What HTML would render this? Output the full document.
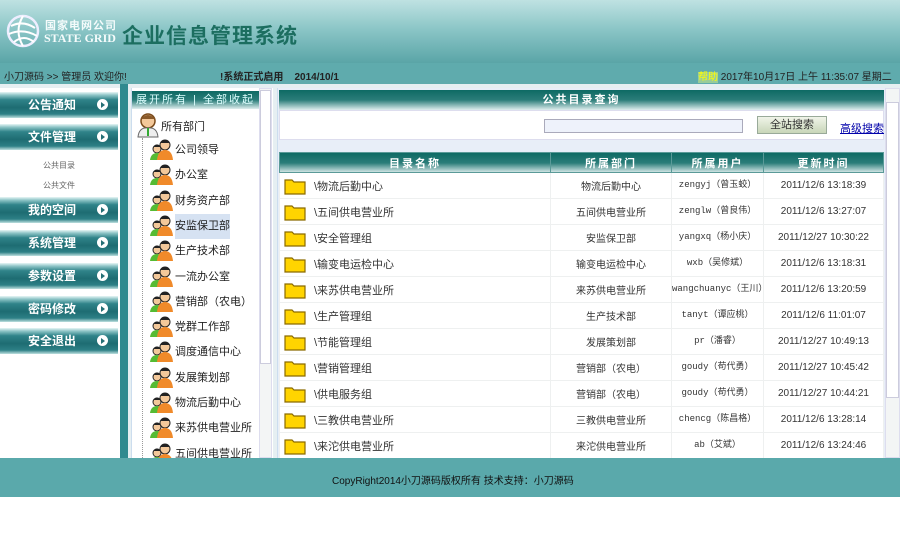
<!DOCTYPE html>
<html><head><meta charset="utf-8">
<style>
*{margin:0;padding:0;box-sizing:border-box}
body{width:900px;height:537px;background:#fff;font-family:"Liberation Sans","Noto Sans CJK SC",sans-serif;font-size:11px;color:#222;position:relative;overflow:hidden}
.a{position:absolute}
#hdr{left:0;top:0;width:900px;height:63px;background:linear-gradient(180deg,#bfe2e2 0%,#8cc6c7 45%,#5aa5a7 100%)}
#nav{left:0;top:63px;width:900px;height:21px;background:#5fabad}
#body{left:0;top:84px;width:900px;height:374px;background:#e6eff2}
#foot{left:0;top:458px;width:900px;height:39px;background:#5aa9ab}
.mb{left:0;width:118px;height:26px;background:linear-gradient(180deg,#e8f6f6 0%,#8dc4c6 12%,#2f8389 30%,#1e6c72 60%,#2d8086 85%,#bfe0e0 100%);color:#fff;font-weight:bold;font-size:12px;text-align:center;line-height:26px;padding-right:14px}
.mb i{position:absolute;right:10px;top:7px;width:11px;height:11px;border-radius:50%;background:#fff}
.mb i:after{content:"";position:absolute;left:4px;top:2.5px;border-left:4px solid #246f75;border-top:3px solid transparent;border-bottom:3px solid transparent}
.th{background:linear-gradient(180deg,#0e6a64 0%,#2b7d79 50%,#dfeeee 100%);color:#fff;font-weight:bold;letter-spacing:2px;text-align:center}
.tr{left:148px;height:25px;line-height:25px;font-size:11px}
.tr svg{position:absolute;left:0;top:0}
.tr span{position:absolute;left:27px;white-space:nowrap}
table{border-collapse:collapse}
td{border:1px solid #eef0f0;height:26px;text-align:center;font-size:10px;color:#333;padding:0}
tr.hd td{height:20px;color:#fff;font-weight:bold;border-color:#5a9a98;font-size:11px}
td.n{text-align:left;padding-left:34px;position:relative;font-size:11px}
td.u{font-family:"Liberation Mono","Noto Sans CJK SC",monospace;font-size:9px;line-height:11px}
.f{position:absolute;left:4px;top:4px}
</style></head><body>
<div id="hdr" class="a">
 <svg class="a" style="left:4px;top:12px" width="38" height="38" viewBox="0 0 38 38"><circle cx="19" cy="19" r="15" fill="none" stroke="#eef" stroke-width="2.5"/><path d="M7 14 Q19 8 31 16 M5 22 Q19 16 33 24 M10 30 Q20 22 30 30 M19 4 Q10 19 19 34" stroke="#fff" stroke-width="2" fill="none"/></svg>
 <div class="a" style="left:45px;top:17px;color:#f4fbfb;font-size:11px;font-weight:bold;letter-spacing:1px">国家电网公司</div>
 <div class="a" style="left:44px;top:31px;color:#f4fbfb;font-size:12px;font-weight:bold;font-family:'Liberation Serif',serif">STATE GRID</div>
 <div class="a" style="left:122px;top:20px;color:#1c6e60;font-size:21px;font-weight:bold;letter-spacing:1px">企业信息管理系统</div>
</div>
<div id="nav" class="a">
 <div class="a" style="left:4px;top:5px;font-size:10px">小刀源码 &gt;&gt; 管理员 欢迎你!</div>
 <div class="a" style="left:220px;top:5px;font-size:10px;font-weight:bold">!系统正式启用&nbsp;&nbsp;&nbsp; 2014/10/1</div>
 <div class="a" style="left:698px;top:5px;font-size:10px;white-space:nowrap"><span style="color:#ff0;background:#9c9">帮助</span> 2017年10月17日 上午 11:35:07 星期二</div>
</div>
<div id="body" class="a">
 <div class="a" style="left:0;top:4px;width:120px;height:370px;background:#fff"></div>
 <div class="a" style="left:120px;top:0;width:8px;height:374px;background:#2f8a8f"></div>
 <div class="a mb" style="top:8px">公告通知<i></i></div>
 <div class="a mb" style="top:40px">文件管理<i></i></div>
 <div class="a" style="left:0;top:72px;width:118px;height:38px;font-size:8px;color:#666;text-align:center;line-height:20px">公共目录<br>公共文件</div>
 <div class="a mb" style="top:113px">我的空间<i></i></div>
 <div class="a mb" style="top:146px">系统管理<i></i></div>
 <div class="a mb" style="top:179px">参数设置<i></i></div>
 <div class="a mb" style="top:212px">密码修改<i></i></div>
 <div class="a mb" style="top:244px">安全退出<i></i></div>

 <div class="a" style="left:131px;top:4px;width:142px;height:370px;background:#fff;border-left:1px solid #cde"></div>
 <div class="a th" style="left:132px;top:7px;width:127px;height:18px;line-height:18px;font-weight:normal;font-size:11px;color:#dff">展开所有 | 全部收起</div>
 <div class="a" style="left:259px;top:4px;width:13px;height:370px;background:#f3f5f5;border:1px solid #dde"></div>
 <div class="a" style="left:260px;top:6px;width:11px;height:274px;background:#fff;border:1px solid #ccd"></div>
 <svg class="a" style="left:136px;top:28px" width="24" height="26"><circle cx="12" cy="9" r="7" fill="#f3c89a" stroke="#7a4a1a" stroke-width="1.5"/><path d="M5 7 Q12 -1 19 7" fill="#8a5a2a"/><path d="M2 25 Q3 15 12 16 Q21 15 22 25Z" fill="#eee" stroke="#666"/><rect x="11" y="16" width="2" height="8" fill="#3a3"/></svg>
 <div class="a" style="left:161px;top:34px;font-size:11px">所有部门</div>
 <div class="a" style="left:142px;top:54px;width:1px;height:320px;border-left:1px dotted #999"></div>
 <div id="tree"></div>

 <div class="a" style="left:277px;top:4px;width:608px;height:370px;background:#e8eef8;border-left:1px solid #cde"></div>
 <div class="a th" style="left:279px;top:6px;width:605px;height:20px;line-height:20px;font-size:11px">公共目录查询</div>
 <div class="a" style="left:279px;top:26px;width:605px;height:30px;background:#fff;border:1px solid #dde"></div>
 <div class="a" style="left:544px;top:35px;width:199px;height:14px;background:#eef2fb;border:1px solid #aab"></div>
 <div class="a" style="left:757px;top:32px;width:70px;height:18px;background:linear-gradient(#f0f4e8,#c8d6b8);border:1px solid #9a9;text-align:center;line-height:16px;font-size:11px;color:#333">全站搜索</div>
 <div class="a" style="left:840px;top:36px;color:#00a;text-decoration:underline;font-size:11px">高级搜索</div>
 <div class="a" style="left:885px;top:4px;width:15px;height:370px;background:#f3f5f5;border:1px solid #dde"></div>
 <div class="a" style="left:886px;top:18px;width:13px;height:296px;background:#fff;border:1px solid #ccd"></div>
 <table class="a" style="left:279px;top:68px;width:605px;background:#fff">
  <tr class="th hd"><td style="width:271px">目录名称</td><td style="width:121px">所属部门</td><td style="width:92px">所属用户</td><td>更新时间</td></tr>
  <tbody id="tb"></tbody>
 </table>
</div>
<div id="foot" class="a"><div class="a" style="left:332px;top:14px;font-size:10px;color:#111">CopyRight2014小刀源码版权所有 技术支持：小刀源码</div></div>
<div class="a" style="left:0;top:497px;width:900px;height:40px;background:#fff"></div>
<script>
var t=["公司领导","办公室","财务资产部","安监保卫部","生产技术部","一流办公室","营销部（农电）","党群工作部","调度通信中心","发展策划部","物流后勤中心","来苏供电营业所","五间供电营业所"];
var h="";t.forEach(function(s,i){var y=138+i*25.3-84;h+='<div class="a tr" style="top:'+y+'px;width:112px"><svg width="26" height="22"><circle cx="9" cy="11" r="4" fill="#f3c89a" stroke="#222" stroke-width="1"/><path d="M5 9 Q9 4 13 9" fill="#222"/><path d="M2 22 Q3 15 9 15 Q15 15 16 22Z" fill="#5b3"/><circle cx="17" cy="7" r="5" fill="#f3c89a" stroke="#222"/><path d="M12 5 Q17 -1 22 5" fill="#222"/><path d="M9 22 Q10 12 17 12 Q24 12 25 22Z" fill="#f08a2a"/></svg><span'+(i==3?' style="background:#d6e2f2"':'')+'>'+s+'</span></div>';});
document.getElementById("tree").outerHTML=h;
var r=[["物流后勤中心","物流后勤中心","zengyj（曾玉蛟）","2011/12/6 13:18:39"],["五间供电营业所","五间供电营业所","zenglw（曾良伟）","2011/12/6 13:27:07"],["安全管理组","安监保卫部","yangxq（杨小庆）","2011/12/27 10:30:22"],["输变电运检中心","输变电运检中心","wxb（吴修斌）","2011/12/6 13:18:31"],["来苏供电营业所","来苏供电营业所","wangchuanyc（王川）","2011/12/6 13:20:59"],["生产管理组","生产技术部","tanyt（谭应桃）","2011/12/6 11:01:07"],["节能管理组","发展策划部","pr（潘睿）","2011/12/27 10:49:13"],["营销管理组","营销部（农电）","goudy（苟代勇）","2011/12/27 10:45:42"],["供电服务组","营销部（农电）","goudy（苟代勇）","2011/12/27 10:44:21"],["三教供电营业所","三教供电营业所","chencg（陈昌格）","2011/12/6 13:28:14"],["来沱供电营业所","来沱供电营业所","ab（艾斌）","2011/12/6 13:24:46"]];
var b="";r.forEach(function(x){b+='<tr><td class="n"><svg class="f" width="22" height="18"><path d="M1 3 L8 3 L10 5 L21 5 L21 17 L1 17Z" fill="#ffd400" stroke="#8a6a00" stroke-width="1.2"/></svg>\\'+x[0]+'</td><td>'+x[1]+'</td><td class="u">'+x[2]+'</td><td>'+x[3]+'</td></tr>';});
document.getElementById("tb").innerHTML=b;
</script>
</body></html>
